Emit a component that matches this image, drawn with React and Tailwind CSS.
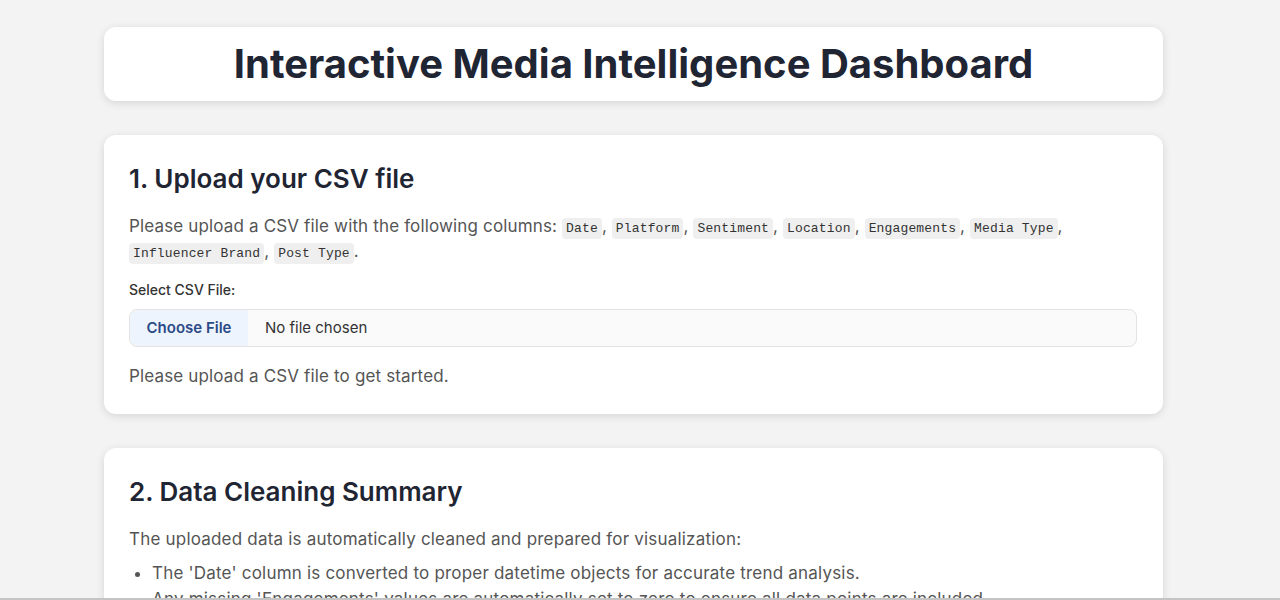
import React from "react";

const COLUMNS = [
  "Date",
  "Platform",
  "Sentiment",
  "Location",
  "Engagements",
  "Media Type",
  "Influencer Brand",
  "Post Type",
];

const Code = ({ children }) => (
  <code className="whitespace-nowrap rounded-[4px] bg-[#efefef] px-[4px] py-[3px] font-['Liberation_Mono',monospace] text-[13px] leading-none text-[#333]">
    {children}
  </code>
);

const Card = ({ title, children }) => (
  <section className="rounded-xl bg-white px-[25px] pt-[24px] pb-[25px] shadow-[0_2px_8px_rgba(0,0,0,0.12)]">
    <h2 className="mb-[15px] text-[26px] leading-[40px] font-semibold text-[#1f2533]">
      {title}
    </h2>
    {children}
  </section>
);

export default function App() {
  return (
    <div className="min-h-screen bg-[#f3f3f3] font-['Inter',sans-serif] text-[#555]">
      <div className="ml-[104px] flex w-[1059px] flex-col gap-[34px] pt-[27px] pb-10">
        <header className="rounded-xl bg-white py-[13px] text-center shadow-[0_2px_8px_rgba(0,0,0,0.12)]">
          <h1 className="text-[40px] leading-[48px] font-bold text-[#1f2533]">
            Interactive Media Intelligence Dashboard
          </h1>
        </header>

        <Card title="1. Upload your CSV file">
          <p className="mb-4 text-[17px] leading-[25px] tracking-[0.15px]">
            Please upload a CSV file with the following columns:{" "}
            {COLUMNS.map((c, i) => (
              <React.Fragment key={c}>
                <Code>{c}</Code>
                {i < COLUMNS.length - 1 ? ", " : "."}
              </React.Fragment>
            ))}
          </p>
          <label className="mb-[9px] block text-[14px] leading-[20px] font-medium text-[#333]">
            Select CSV File:
          </label>
          <input
            type="file"
            accept=".csv"
            className="block h-[38px] w-[1008px] rounded-lg border border-[#e3e3e3] bg-[#fafafa] text-[15px] text-[#333] file:mr-[17px] file:h-[36px] file:w-[118px] file:rounded-l-lg file:border-0 file:bg-[#eef4fd] file:text-[15px] file:font-semibold file:text-[#2c4a86]"
          />
          <p className="mt-[17px] text-[17px] leading-[25px] tracking-[0.15px]">
            Please upload a CSV file to get started.
          </p>
        </Card>

        <Card title="2. Data Cleaning Summary">
          <p className="text-[17px] leading-[25px] tracking-[0.2px]">
            The uploaded data is automatically cleaned and prepared for visualization:
          </p>
          <ul className="mt-2 list-disc pl-[23px] text-[17px] leading-[26px] tracking-[0.2px]">
            <li>The 'Date' column is converted to proper datetime objects for accurate trend analysis.</li>
            <li>Any missing 'Engagements' values are automatically set to zero to ensure all data points are included.</li>
            <li>Column names are normalized for consistent processing across all charts.</li>
          </ul>
        </Card>
      </div>
      <div className="fixed inset-x-0 bottom-0 h-[2px] bg-[#c4c4c4]" />
    </div>
  );
}
